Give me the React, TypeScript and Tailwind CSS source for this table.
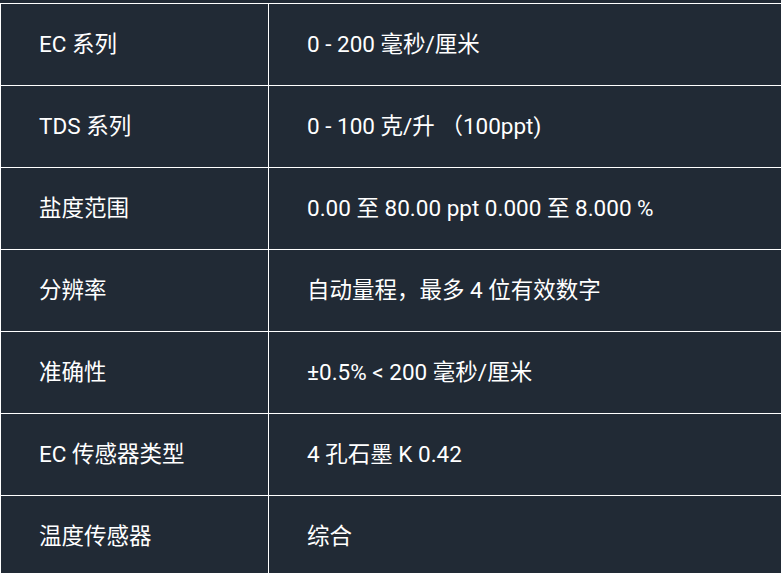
import React from 'react';

const rows = [
  ['EC 系列', '0 - 200 毫秒/厘米'],
  ['TDS 系列', '0 - 100 克/升 （100ppt)'],
  ['盐度范围', '0.00 至 80.00 ppt 0.000 至 8.000 %'],
  ['分辨率', '自动量程，最多 4 位有效数字'],
  ['准确性', '±0.5% < 200 毫秒/厘米'],
  ['EC 传感器类型', '4 孔石墨 K 0.42'],
  ['温度传感器', '综合'],
];

export default function App() {
  return (
    <div
      className="w-[781px] h-[573px] overflow-hidden bg-[#212a35] pt-[3px] text-white"
      style={{ fontFamily: 'Roboto, "Noto Sans CJK SC", sans-serif' }}
    >
      <table className="border-collapse w-[800px] text-[22.5px]">
        <tbody>
          {rows.map(([k, v]) => (
            <tr key={k} className="h-[82px]">
              <td className="w-[268px] border border-white pl-[38px] align-middle">{k}</td>
              <td className="border border-white pl-[38px] align-middle">{v}</td>
            </tr>
          ))}
        </tbody>
      </table>
    </div>
  );
}
